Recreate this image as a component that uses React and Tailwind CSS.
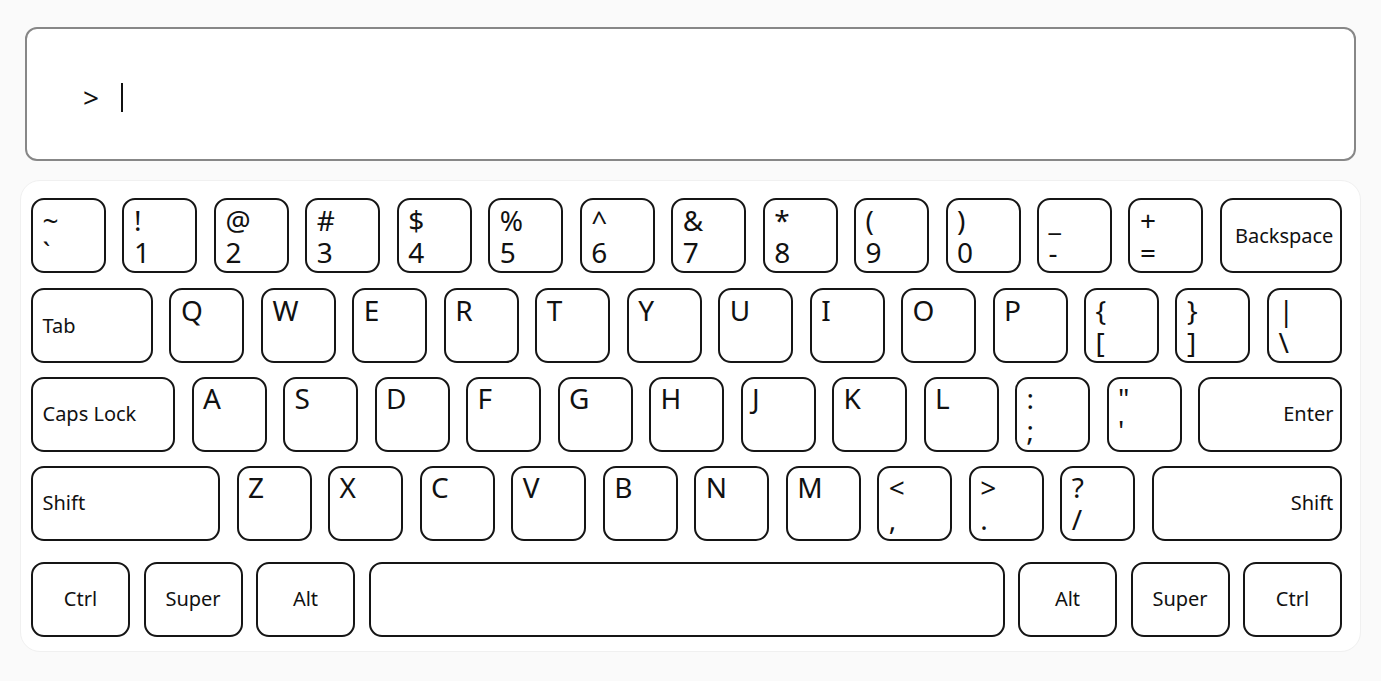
import React from "react";

const FONT = { fontFamily: '"Noto Sans", "Open Sans", sans-serif' };

// rows of the keyboard: [top, bottom] legends or a modifier label
const rows = [
  [
    ["~", "`"], ["!", "1"], ["@", "2"], ["#", "3"], ["$", "4"], ["%", "5"], ["^", "6"],
    ["&", "7"], ["*", "8"], ["(", "9"], [")", "0"], ["_", "-"], ["+", "="],
    { label: "Backspace", w: "w-[122px]", align: "right" },
  ],
  [
    { label: "Tab", w: "w-[122px]", align: "left" },
    ["Q"], ["W"], ["E"], ["R"], ["T"], ["Y"], ["U"], ["I"], ["O"], ["P"],
    ["{", "["], ["}", "]"], ["|", "\\"],
  ],
  [
    { label: "Caps Lock", w: "w-[144px]", align: "left" },
    ["A"], ["S"], ["D"], ["F"], ["G"], ["H"], ["J"], ["K"], ["L"],
    [":", ";"], ['"', "'"],
    { label: "Enter", w: "w-[144px]", align: "right" },
  ],
  [
    { label: "Shift", w: "w-[189px]", align: "left" },
    ["Z"], ["X"], ["C"], ["V"], ["B"], ["N"], ["M"],
    ["<", ","], [">", "."], ["?", "/"],
    { label: "Shift", w: "w-[190px]", align: "right" },
  ],
  [
    { label: "Ctrl", w: "w-[99px]", align: "center" },
    { label: "Super", w: "w-[99px]", align: "center" },
    { label: "Alt", w: "w-[99px]", align: "center" },
    { label: "", w: "w-[636px]", align: "center" },
    { label: "Alt", w: "w-[99px]", align: "center" },
    { label: "Super", w: "w-[99px]", align: "center" },
    { label: "Ctrl", w: "w-[99px]", align: "center" },
  ],
];

const rowGaps = ["", "mt-[15px]", "mt-[13.5px]", "mt-[14px]", "mt-[21px]"];

function Key({ k }) {
  if (Array.isArray(k)) {
    return (
      <div className="w-[75px] h-[75px] shrink-0 rounded-[13px] border-2 border-[#151515] bg-white pl-[9.5px] pt-[3.5px] flex flex-col text-[28px] leading-[32px] text-[#111]">
        {k.map((c, i) => (
          <span key={i}>{c}</span>
        ))}
      </div>
    );
  }
  const justify =
    k.align === "left" ? "justify-start pl-[9.5px]" : k.align === "right" ? "justify-end pr-[6.5px]" : "justify-center";
  return (
    <div
      className={`${k.w} h-[75px] shrink-0 rounded-[13px] border-2 border-[#151515] bg-white flex items-center ${justify} text-[20px] text-[#111]`}>
      {k.label}
    </div>
  );
}

export default function App() {
  return (
    <div className="min-h-[681px] w-[1381px] bg-[#fafafa] pt-[27px]" style={FONT}>
      {/* input line */}
      <div className="ml-[25px] w-[1331px] h-[134px] rounded-[12px] border-2 border-[#878787] bg-white flex items-center pl-[56px] pt-[6px]">
        <span className="text-[28px] leading-none text-[#111]">&gt;</span>
        <span className="ml-[22px] w-[1.5px] h-[29px] bg-[#111]" />
      </div>

      {/* keyboard */}
      <div className="mt-[19px] ml-[20px] w-[1341px] h-[472px] rounded-[20px] border border-[#f0f0f0] bg-white pl-[10px] pt-[17px]">
        {rows.map((row, r) => (
          <div key={r} className={`w-[1311px] flex justify-between ${rowGaps[r]}`}>
            {row.map((k, i) => (
              <Key key={i} k={k} />
            ))}
          </div>
        ))}
      </div>
    </div>
  );
}
